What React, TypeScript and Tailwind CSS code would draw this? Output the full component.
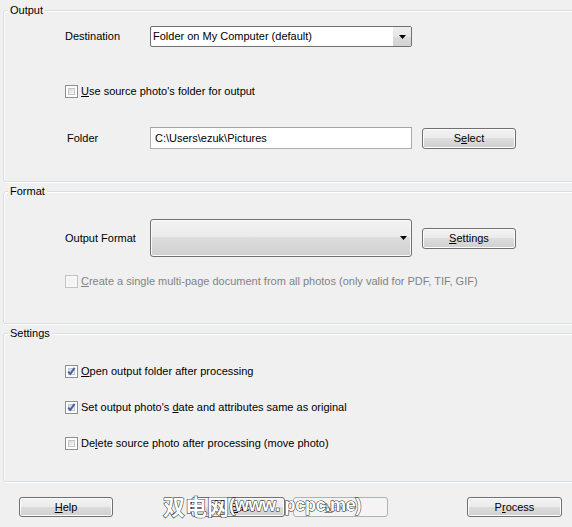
import React from "react";

function Group({ title, className, children }: { title: string; className: string; children: React.ReactNode }) {
  return (
    <div
      className={`relative ml-[3px] w-[620px] rounded-[3px] border border-[#d5dfe5] [box-shadow:inset_1px_1px_0_#fff,1px_1px_0_#fff] ${className}`}
    >
      <span className="absolute left-[4px] top-[-7px] bg-[#f0f0f0] px-[2px] leading-[13px]">{title}</span>
      {children}
    </div>
  );
}

function Check({ checked = false, disabled = false }: { checked?: boolean; disabled?: boolean }) {
  return (
    <span
      className={`relative inline-block h-[13px] w-[13px] shrink-0 border ${
        disabled ? "border-[#c3c3c3] bg-[#f7f7f7]" : "border-[#8e8f8f] bg-white"
      }`}
    >
      <span
        className={`absolute inset-[2px] ${
          disabled
            ? "bg-[#f3f3f3]"
            : "bg-[linear-gradient(135deg,#cfd3d8,#eceef0_60%,#f8f8f8)] [box-shadow:inset_0_0_0_1px_#c4c8cd]"
        }`}
      />
      {checked && (
        <svg className="absolute left-0 top-0" width="11" height="11" viewBox="0 0 11 11">
          <path d="M2.2 5.6 L4.3 7.9 L8.6 1.8" fill="none" stroke="#4a5fa6" strokeWidth="2" strokeLinejoin="miter" />
        </svg>
      )}
    </span>
  );
}

function Arrow() {
  return (
    <svg width="7" height="4" viewBox="0 0 7 4">
      <polygon points="0,0 7,0 3.5,4" fill="#000" />
    </svg>
  );
}

function Btn({ children, className = "", disabled = false }: { children: React.ReactNode; className?: string; disabled?: boolean }) {
  return (
    <div
      className={`flex items-center justify-center rounded-[3px] border ${
        disabled
          ? "border-[#adb2b5] bg-[#f4f4f4] text-[#838383]"
          : "border-[#707070] bg-[linear-gradient(#f2f2f2,#ebebeb_50%,#dddddd_50%,#cfcfcf)] [box-shadow:inset_0_0_0_1px_#fcfcfc]"
      } ${className}`}
    >
      {children}
    </div>
  );
}

function CheckRow({ checked, disabled, children, className = "" }: { checked?: boolean; disabled?: boolean; children: React.ReactNode; className?: string }) {
  return (
    <div className={`flex h-[13px] items-center pl-[61px] ${className}`}>
      <Check checked={checked} disabled={disabled} />
      <span className={`ml-[3px] whitespace-nowrap leading-[13px] ${disabled ? "text-[#838383]" : ""}`}>{children}</span>
    </div>
  );
}

export default function App() {
  return (
    <div className="relative h-[527px] w-[572px] overflow-hidden bg-[#f0f0f0] font-['Liberation_Sans',Arial,sans-serif] text-[11px] text-black">
      <div className="h-[10px]" />
      <Group title="Output" className="h-[172px]">
        <div className="mt-[15px] flex h-[21px] items-center pl-[61px]">
          <span className="w-[85px]">Destination</span>
          <div className="flex h-[21px] w-[262px] items-center overflow-hidden rounded-[2px] border border-[#707070] bg-white">
            <span className="flex-1 pl-[2px]">Folder on My Computer (default)</span>
            <div className="flex h-full w-[18px] items-center justify-center bg-[linear-gradient(#eeeeee,#e6e6e6_50%,#dadada_50%,#d3d3d3)]">
              <Arrow />
            </div>
          </div>
        </div>
        <CheckRow className="mt-[38px]">
          <u className="underline-offset-[1px]">U</u>se source photo's folder for output
        </CheckRow>
        <div className="mt-[29px] flex h-[22px] items-center pl-[61px]">
          <span className="w-[85px] pl-[2px]">Folder</span>
          <div className="flex h-[22px] w-[262px] items-center border border-[#abadb3] border-t-[#a0a3aa] bg-white pl-[4px]">
            C:\Users\ezuk\Pictures
          </div>
          <Btn className="ml-[10px] h-[21px] w-[94px]">
            <span>
              S<u className="underline-offset-[1px]">e</u>lect
            </span>
          </Btn>
        </div>
      </Group>
      <div className="h-[9px]" />
      <Group title="Format" className="h-[133px]">
        <div className="mt-[27px] flex h-[38px] items-center pl-[61px]">
          <span className="w-[85px]">Output Format</span>
          <div className="flex h-[38px] w-[262px] items-center justify-end rounded-[3px] border border-[#707070] bg-[linear-gradient(#f2f2f2,#ebebeb_48%,#dddddd_48%,#cfcfcf)] pr-[4px] [box-shadow:inset_0_0_0_1px_#fafafa]">
            <Arrow />
          </div>
          <Btn className="ml-[10px] h-[21px] w-[94px]">
            <span>
              <u className="underline-offset-[1px]">S</u>ettings
            </span>
          </Btn>
        </div>
        <CheckRow disabled className="mt-[18px]">
          <u className="underline-offset-[1px]">C</u>reate a single multi-page document from all photos (only valid for PDF, TIF, GIF)
        </CheckRow>
      </Group>
      <div className="h-[9px]" />
      <Group title="Settings" className="h-[149px]">
        <CheckRow checked className="mt-[31px]">
          <u className="underline-offset-[1px]">O</u>pen output folder after processing
        </CheckRow>
        <CheckRow checked className="mt-[23px]">
          Set output photo's <u className="underline-offset-[1px]">d</u>ate and attributes same as original
        </CheckRow>
        <CheckRow className="mt-[23px]">
          De<u className="underline-offset-[1px]">l</u>ete source photo after processing (move photo)
        </CheckRow>
      </Group>
      <div className="mt-[15px] flex h-[20px] pl-[19px]">
        <Btn className="h-[20px] w-[94px]">
          <span>
            <u className="underline-offset-[1px]">H</u>elp
          </span>
        </Btn>
        <Btn className="ml-[78px] h-[20px] w-[94px]">
          <span>
            &lt; <u className="underline-offset-[1px]">B</u>ack
          </span>
        </Btn>
        <Btn disabled className="ml-[8px] h-[20px] w-[95px]">
          <span>
            <u className="underline-offset-[1px]">N</u>ext &gt;
          </span>
        </Btn>
        <Btn className="ml-[79px] h-[20px] w-[95px]">
          <span>
            P<u className="underline-offset-[1px]">r</u>ocess
          </span>
        </Btn>
      </div>
      <div className="absolute left-[163px] top-[492px] flex items-center whitespace-nowrap font-bold leading-[26px] text-white [-webkit-text-stroke:1px_#222] [paint-order:stroke_fill]">
        <span className="font-['Noto_Sans_CJK_SC',sans-serif] text-[22px]">双电网</span>
        <span className="font-['Liberation_Sans',sans-serif] text-[18px] tracking-[-0.3px]">(www. pcpc.me)</span>
      </div>
    </div>
  );
}
